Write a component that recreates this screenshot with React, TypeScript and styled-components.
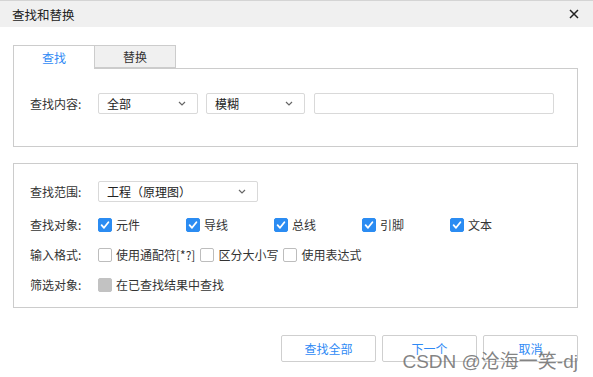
import React from 'react';
import styled, { createGlobalStyle } from 'styled-components';

const FONT = `"Noto Sans CJK SC", "Noto Sans", sans-serif`;

const GlobalStyle = createGlobalStyle`
    html, body {
        margin: 0;
        padding: 0;
        background: #ffffff;
    }
    * {
        box-sizing: border-box;
    }
`;

const Chevron: React.FC = () => (
    <svg width="8" height="5" viewBox="0 0 8 5">
        <path d="M1 1l3 3 3-3" fill="none" stroke="#666" strokeWidth="1.2" />
    </svg>
);

const Check: React.FC = () => (
    <svg width="10" height="10" viewBox="0 0 10 10">
        <path d="M1.6 5.2l2.4 2.6 4.4-5.6" fill="none" stroke="#fff" strokeWidth="1.8" strokeLinecap="round" strokeLinejoin="round" />
    </svg>
);

const Select: React.FC<{ width: number; value: string }> = ({ width, value }) => (
    <SelectBox $width={width}>
        <span>{value}</span>
        <Chevron />
    </SelectBox>
);

const CheckItem: React.FC<{ label: string; checked?: boolean; disabled?: boolean; width?: number }> = ({
    label,
    checked,
    disabled,
    width,
}) => (
    <CheckLabel $width={width}>
        <Box $checked={checked} $disabled={disabled}>
            {checked && <Check />}
        </Box>
        <span>{label}</span>
    </CheckLabel>
);

const TARGETS = ['元件', '导线', '总线', '引脚', '文本'];

const App: React.FC = () => {
    return (
        <Dialog>
            <GlobalStyle />
            <TitleBar>
                <Title>查找和替换</Title>
                <Close>
                    <svg width="10" height="10" viewBox="0 0 10 10">
                        <path d="M1 1l8 8M9 1l-8 8" stroke="#222" strokeWidth="1.5" />
                    </svg>
                </Close>
            </TitleBar>
            <Body>
                <Tabs>
                    <Tab $active>查找</Tab>
                    <Tab>替换</Tab>
                </Tabs>
                <FindPanel>
                    <Row>
                        <Label>查找内容:</Label>
                        <Select width={100} value="全部" />
                        <Select width={99} value="模糊" />
                        <TextInput />
                    </Row>
                </FindPanel>
                <OptionsPanel>
                    <Row $spaced>
                        <Label>查找范围:</Label>
                        <Select width={160} value="工程（原理图）" />
                    </Row>
                    <Row>
                        <Label>查找对象:</Label>
                        {TARGETS.map((t) => (
                            <CheckItem key={t} label={t} checked width={88} />
                        ))}
                    </Row>
                    <Row>
                        <Label>输入格式:</Label>
                        <FormatGroup>
                            <CheckItem label="使用通配符[*?]" />
                            <CheckItem label="区分大小写" />
                            <CheckItem label="使用表达式" />
                        </FormatGroup>
                    </Row>
                    <Row>
                        <Label>筛选对象:</Label>
                        <CheckItem label="在已查找结果中查找" disabled />
                    </Row>
                </OptionsPanel>
                <Footer>
                    <Button>查找全部</Button>
                    <Button>下一个</Button>
                    <Button>取消</Button>
                </Footer>
            </Body>
            <Watermark>CSDN @沧海一笑-dj</Watermark>
        </Dialog>
    );
};

const Dialog = styled.div`
    position: relative;
    width: 593px;
    height: 377px;
    background: #ffffff;
    font-family: ${FONT};
    color: #333333;
    overflow: hidden;
`;

const TitleBar = styled.div`
    display: flex;
    align-items: center;
    justify-content: space-between;
    height: 27px;
    padding: 0 14px 0 12px;
    background: #f0f0f0;
    border-top: 1px solid #d4d4d4;
`;

const Title = styled.span`
    font-size: 12.5px;
    color: #222222;
`;

const Close = styled.span`
    display: flex;
    align-items: center;
`;

const Body = styled.div`
    padding: 18px 15px 0 13px;
`;

const Tabs = styled.div`
    display: flex;
    height: 23px;
`;

const Tab = styled.div<{ $active?: boolean }>`
    width: ${(p) => (p.$active ? 82 : 81)}px;
    height: ${(p) => (p.$active ? 24 : 23)}px;
    display: flex;
    align-items: center;
    justify-content: center;
    font-size: 12px;
    border: 1px solid #cccccc;
    border-bottom: ${(p) => (p.$active ? 'none' : '1px solid #cccccc')};
    border-left: ${(p) => (p.$active ? '1px solid #cccccc' : 'none')};
    background: ${(p) => (p.$active ? '#ffffff' : '#f0f0f0')};
    color: ${(p) => (p.$active ? '#2f8af5' : '#333333')};
    position: relative;
    z-index: 1;
`;

const FindPanel = styled.div`
    height: 79px;
    border: 1px solid #cccccc;
    padding: 24px 0 0 16px;
`;

const OptionsPanel = styled.div`
    margin-top: 16px;
    height: 145px;
    border: 1px solid #cccccc;
    padding: 17px 0 0 16px;
    display: flex;
    flex-direction: column;
    gap: 9px;
`;

const Row = styled.div<{ $spaced?: boolean }>`
    display: flex;
    align-items: center;
    height: 21px;
    ${(p) => (p.$spaced ? 'margin-bottom: 3px;' : '')}
`;

const Label = styled.span`
    width: 68px;
    font-size: 12px;
    color: #333333;
    flex-shrink: 0;
`;

const SelectBox = styled.div<{ $width: number }>`
    width: ${(p) => p.$width}px;
    height: 21px;
    margin-right: 8px;
    display: flex;
    align-items: center;
    justify-content: space-between;
    padding: 0 11px 0 8px;
    border: 1px solid #d9d9d9;
    border-radius: 2px;
    font-size: 12px;
    color: #222222;
`;

const TextInput = styled.div`
    width: 240px;
    height: 21px;
    margin-left: 1px;
    border: 1px solid #d9d9d9;
    border-radius: 2px;
`;

const CheckLabel = styled.label<{ $width?: number }>`
    display: flex;
    align-items: center;
    gap: 4px;
    ${(p) => (p.$width ? `width: ${p.$width}px;` : '')}
    font-size: 12px;
    color: #333333;
`;

const Box = styled.span<{ $checked?: boolean; $disabled?: boolean }>`
    width: 14px;
    height: 14px;
    border-radius: 2px;
    display: flex;
    align-items: center;
    justify-content: center;
    flex-shrink: 0;
    background: ${(p) => (p.$checked ? '#2b8cf2' : p.$disabled ? '#c2c2c2' : '#ffffff')};
    border: 1px solid ${(p) => (p.$checked ? '#2b8cf2' : p.$disabled ? '#c2c2c2' : '#bdbdbd')};
`;

const FormatGroup = styled.div`
    display: flex;
    align-items: center;
    gap: 5px;
`;

const Footer = styled.div`
    display: flex;
    justify-content: flex-end;
    gap: 6px;
    margin-top: 27px;
`;

const Button = styled.div`
    width: 95px;
    height: 27px;
    display: flex;
    align-items: center;
    justify-content: center;
    border: 1px solid #cfcfcf;
    border-radius: 2px;
    font-size: 12px;
    color: #2f8af5;
    background: #ffffff;
`;

const Watermark = styled.div`
    position: absolute;
    right: 15px;
    bottom: 6px;
    font-family: "Liberation Sans", "Noto Sans CJK SC", sans-serif;
    font-size: 19px;
    line-height: 1;
    color: rgba(110, 110, 110, 0.85);
    white-space: nowrap;
    pointer-events: none;
`;

export default App;
